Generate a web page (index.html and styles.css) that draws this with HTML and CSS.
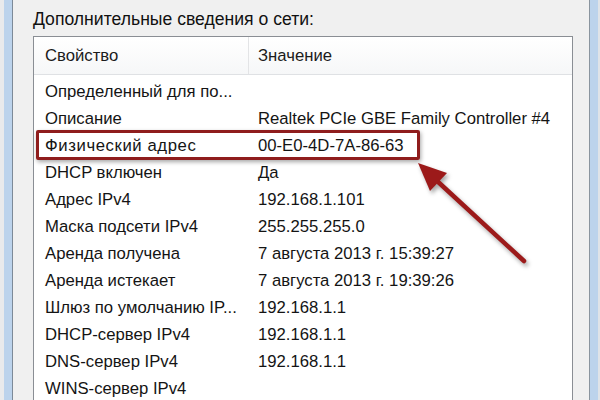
FILE: index.html
```html
<!DOCTYPE html>
<html lang="ru">
<head>
<meta charset="utf-8">
<link rel="stylesheet" href="styles.css">
</head>
<body>
<div class="window">
  <div class="frame frame-left"></div>
  <div class="dialog">
    <div class="title">Дополнительные сведения о сети:</div>
    <div class="listbox">
      <div class="header">
        <div class="hcell c1">Свойство</div>
        <div class="hcell c2">Значение</div>
      </div>
      <div class="rows">
        <div class="row"><span class="c1">Определенный для по...</span><span class="c2"></span></div>
        <div class="row"><span class="c1">Описание</span><span class="c2">Realtek PCIe GBE Family Controller #4</span></div>
        <div class="row marked"><span class="c1">Физический адрес</span><span class="c2">00-E0-4D-7A-86-63</span></div>
        <div class="row"><span class="c1">DHCP включен</span><span class="c2">Да</span></div>
        <div class="row"><span class="c1">Адрес IPv4</span><span class="c2">192.168.1.101</span></div>
        <div class="row"><span class="c1">Маска подсети IPv4</span><span class="c2">255.255.255.0</span></div>
        <div class="row"><span class="c1">Аренда получена</span><span class="c2">7 августа 2013 г. 15:39:27</span></div>
        <div class="row"><span class="c1">Аренда истекает</span><span class="c2">7 августа 2013 г. 19:39:26</span></div>
        <div class="row"><span class="c1">Шлюз по умолчанию IP...</span><span class="c2">192.168.1.1</span></div>
        <div class="row"><span class="c1">DHCP-сервер IPv4</span><span class="c2">192.168.1.1</span></div>
        <div class="row"><span class="c1">DNS-сервер IPv4</span><span class="c2">192.168.1.1</span></div>
        <div class="row"><span class="c1">WINS-сервер IPv4</span><span class="c2"></span></div>
      </div>
    </div>
  </div>
  <div class="frame frame-right"></div>
</div>
<div class="highlight"></div>
<svg class="arrow" width="600" height="400" viewBox="0 0 600 400">
  <line x1="524" y1="261" x2="436" y2="180" stroke="#9c1a1a" stroke-width="4.5" stroke-linecap="round"/>
  <polygon points="418,163 447,173 430,191" fill="#9c1a1a"/>
</svg>
</body>
</html>
```

FILE: styles.css
```css
html, body {
  margin: 0;
  padding: 0;
}
body {
  width: 600px;
  height: 400px;
  overflow: hidden;
  background: #f0f0f0;
  font-family: "Liberation Sans", Arial, sans-serif;
  font-size: 16.7px;
  color: #141414;
  position: relative;
}
.window {
  display: flex;
  height: 400px;
}
.frame {
  flex: none;
  background: #bcd3ec;
}
.frame-left {
  width: 8px;
  border-left: 4px solid #e9eaec;
  box-sizing: content-box;
  border-right: 1px solid #7d8a98;
}
.frame-right {
  width: 8px;
  border-left: 1px solid #8a949e;
  border-right: 2px solid #dfe3e8;
}
.dialog {
  flex: 1;
  display: flex;
  flex-direction: column;
  padding: 8px 16px 0 20px;
  background: #f0f0f0;
}
.title {
  height: 22px;
  line-height: 22px;
  margin-bottom: 6px;
  font-size: 17.6px;
  color: #111;
}
.listbox {
  flex: 1;
  background: #fff;
  border: 1px solid #8a8e94;
  border-bottom: none;
}
.header {
  display: flex;
  height: 37px;
  background: linear-gradient(#ffffff, #f6f7f8);
  border-bottom: 1px solid #dfe1e4;
}
.hcell {
  line-height: 38px;
  padding-left: 11px;
  color: #1c1c1c;
}
.hcell.c1 {
  width: 203px;
  border-right: 1px solid #e3e4e6;
}
.hcell.c2 {
  flex: 1;
  padding-left: 9px;
}
.rows {
  padding-top: 3px;
}
.row {
  display: flex;
  height: 27px;
  line-height: 27px;
  padding-left: 11px;
  white-space: nowrap;
}
.row .c1 {
  width: 213px;
  flex: none;
}
.row .c2 {
  flex: 1;
}
.row.marked .c1 {
  letter-spacing: 0.6px;
}
.highlight {
  position: absolute;
  left: 36px;
  top: 130px;
  width: 378px;
  height: 24px;
  border: 3px solid #8f1d1d;
  border-radius: 2px;
  box-shadow: 1px 2px 4px rgba(0, 0, 0, 0.35);
}
.arrow {
  position: absolute;
  left: 0;
  top: 0;
  filter: drop-shadow(2px 3px 2px rgba(0, 0, 0, 0.35));
}
```
